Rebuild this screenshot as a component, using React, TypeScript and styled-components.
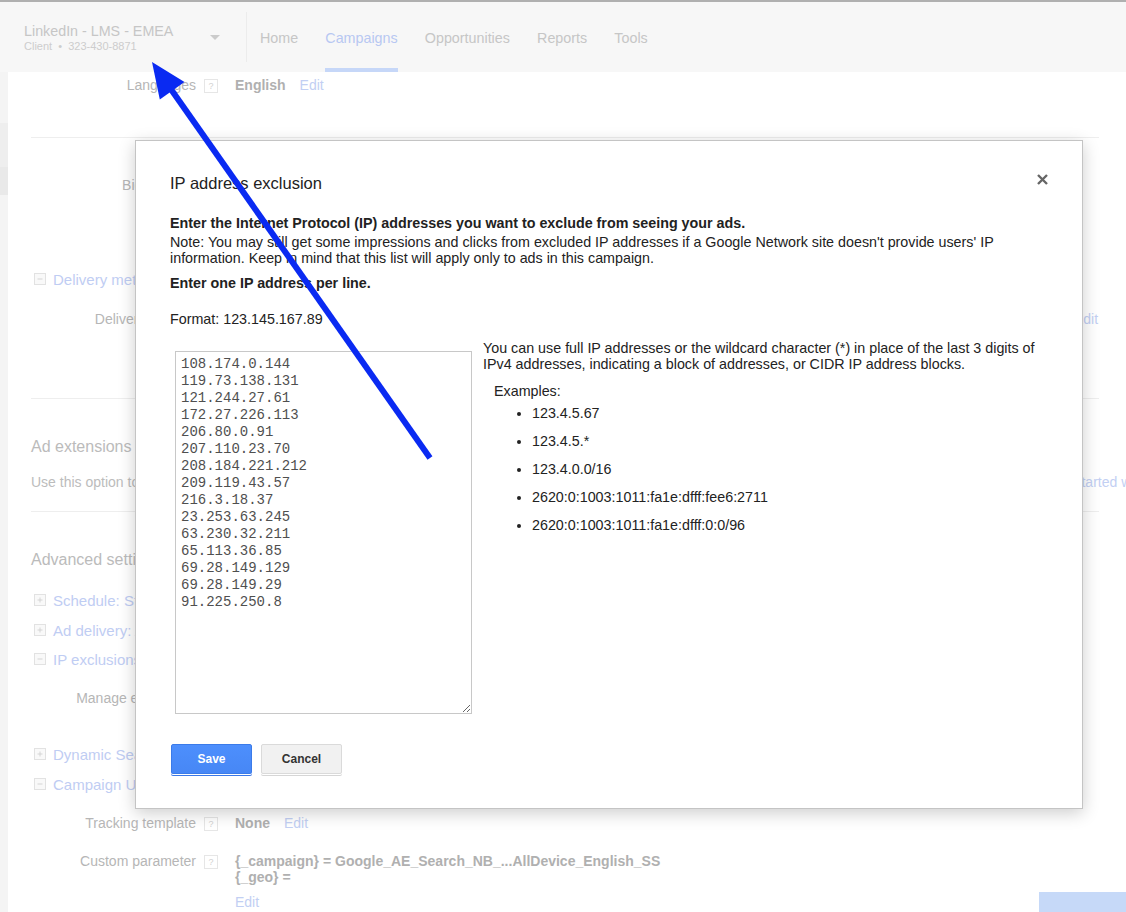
import React from "react";
import styled, { createGlobalStyle } from "styled-components";

const GlobalStyle = createGlobalStyle`
  html, body {
    margin: 0;
    padding: 0;
  }
  body {
    font-family: Arial, "Liberation Sans", Helvetica, sans-serif;
    background: #fff;
  }
`;

const IPS = [
  "108.174.0.144",
  "119.73.138.131",
  "121.244.27.61",
  "172.27.226.113",
  "206.80.0.91",
  "207.110.23.70",
  "208.184.221.212",
  "209.119.43.57",
  "216.3.18.37",
  "23.253.63.245",
  "63.230.32.211",
  "65.113.36.85",
  "69.28.149.129",
  "69.28.149.29",
  "91.225.250.8",
];

const EXAMPLES = [
  "123.4.5.67",
  "123.4.5.*",
  "123.4.0.0/16",
  "2620:0:1003:1011:fa1e:dfff:fee6:2711",
  "2620:0:1003:1011:fa1e:dfff:0:0/96",
];

const NAV = ["Home", "Campaigns", "Opportunities", "Reports", "Tools"];

const ExpandIcon: React.FC<{ open?: boolean }> = ({ open }) => (
  <ExpandBox>
    <svg width="12" height="12" viewBox="0 0 12 12">
      <line x1="3" y1="6" x2="9" y2="6" stroke="#cfcfcf" strokeWidth="1" />
      {!open && <line x1="6" y1="3" x2="6" y2="9" stroke="#cfcfcf" strokeWidth="1" />}
    </svg>
  </ExpandBox>
);

export default function App() {
  return (
    <Page>
      <GlobalStyle />
      <Header>
        <Account>
          <div>
            <AccountName>LinkedIn - LMS - EMEA</AccountName>
            <AccountSub>Client&nbsp; •&nbsp; 323-430-8871</AccountSub>
          </div>
          <Caret />
        </Account>
        <Nav>
          {NAV.map((item) => (
            <NavItem key={item} $active={item === "Campaigns"}>
              {item}
            </NavItem>
          ))}
        </Nav>
      </Header>

      <Body>
        <LeftRail>
          <RailBlock $top={51} $height={44} $shade="#eeeeee" />
          <RailBlock $top={0} $height={28} $shade="#e9e9e9" />
        </LeftRail>
        <Main>
          <FieldRow $top={3}>
            <Label>Languages</Label>
            <Help>?</Help>
            <Value>English</Value>
            <EditLink>Edit</EditLink>
          </FieldRow>
          <Divider $top={42} />
          <FieldRow $top={37}>
            <Label>Bid strategy</Label>
          </FieldRow>
          <SectionToggle $top={74}>
            <ExpandIcon open />
            <SectionLink>Delivery method: Standard</SectionLink>
          </SectionToggle>
          <SplitRow $top={20} $split={1043}>
            <FieldRow $top={0}>
              <Label>Delivery method</Label>
            </FieldRow>
            <Link>Edit</Link>
          </SplitRow>
          <Divider $top={69} />
          <SectionTitle $top={38}>Ad extensions</SectionTitle>
          <SplitRow $top={15} $split={1017}>
            <Muted>Use this option to add extra information to your ads</Muted>
            <Link>Get started with ad extensions</Link>
          </SplitRow>
          <Divider $top={19} />
          <SectionTitle $top={38}>Advanced settings</SectionTitle>
          <SectionToggle $top={20}>
            <ExpandIcon />
            <SectionLink>Schedule: Start date, end date, ad scheduling</SectionLink>
          </SectionToggle>
          <SectionToggle $top={10}>
            <ExpandIcon />
            <SectionLink>Ad delivery: Ad rotation, frequency capping</SectionLink>
          </SectionToggle>
          <SectionToggle $top={9}>
            <ExpandIcon open />
            <SectionLink>IP exclusions</SectionLink>
          </SectionToggle>
          <FieldRow $top={19}>
            <Label>Manage exclusions</Label>
          </FieldRow>
          <SectionToggle $top={36}>
            <ExpandIcon />
            <SectionLink>Dynamic Search Ads</SectionLink>
          </SectionToggle>
          <SectionToggle $top={10}>
            <ExpandIcon open />
            <SectionLink>Campaign URL options (advanced)</SectionLink>
          </SectionToggle>
          <FieldRow $top={19}>
            <Label>Tracking template</Label>
            <Help>?</Help>
            <Value>None</Value>
            <EditLink>Edit</EditLink>
          </FieldRow>
          <FieldRow $top={18}>
            <Label>Custom parameter</Label>
            <Help>?</Help>
            <ValueStack>
              <Value>{"{_campaign} = Google_AE_Search_NB_...AllDevice_English_SS"}</Value>
              <Value>{"{_geo} ="}</Value>
              <StackEdit>Edit</StackEdit>
            </ValueStack>
          </FieldRow>
        </Main>
      </Body>

      <FooterButton />

      <Dialog role="dialog">
        <DialogHead>
          <DialogTitle>IP address exclusion</DialogTitle>
          <CloseButton aria-label="Close">
            <svg width="11" height="11" viewBox="0 0 11 11">
              <path d="M1 1 L10 10 M10 1 L1 10" stroke="#666" strokeWidth="2.4" />
            </svg>
          </CloseButton>
        </DialogHead>
        <Lead>Enter the Internet Protocol (IP) addresses you want to exclude from seeing your ads.</Lead>
        <Note>
          Note: You may still get some impressions and clicks from excluded IP addresses if a Google Network site
          doesn't provide users' IP information. Keep in mind that this list will apply only to ads in this campaign.
        </Note>
        <Instruction>Enter one IP address per line.</Instruction>
        <Format>Format: 123.145.167.89</Format>
        <EntryRow>
          <IpBox defaultValue={IPS.join("\n")} spellCheck={false} />
          <HelpColumn>
            <HelpText>
              You can use full IP addresses or the wildcard character (*) in place of the last 3 digits of IPv4
              addresses, indicating a block of addresses, or CIDR IP address blocks.
            </HelpText>
            <ExamplesLabel>Examples:</ExamplesLabel>
            <ExampleList>
              {EXAMPLES.map((ex) => (
                <li key={ex}>{ex}</li>
              ))}
            </ExampleList>
          </HelpColumn>
        </EntryRow>
        <Actions>
          <Button $primary>Save</Button>
          <Button>Cancel</Button>
        </Actions>
      </Dialog>

      <Arrow width="1126" height="912" viewBox="0 0 1126 912">
        <line x1="430" y1="458" x2="168" y2="85" stroke="#0a2af2" strokeWidth="6" />
        <polygon points="152,62 184.5,82 159.8,99.5" fill="#0a2af2" />
      </Arrow>
    </Page>
  );
}

const Page = styled.div`
  position: relative;
  width: 1126px;
  height: 912px;
  overflow: hidden;
  background: #fff;
`;

const Header = styled.header`
  display: flex;
  height: 70px;
  background: #f7f7f7;
  border-top: 2px solid #b0b0b0;
`;

const Account = styled.div`
  width: 247px;
  flex: none;
  box-sizing: border-box;
  margin: 10px 0;
  padding: 2px 26px 0 24px;
  display: flex;
  align-items: center;
  justify-content: space-between;
  border-right: 1px solid #ececec;
`;

const AccountName = styled.div`
  font-size: 14.3px;
  line-height: 16px;
  color: #c6c6c6;
`;

const AccountSub = styled.div`
  font-size: 11px;
  line-height: 14px;
  color: #cdcdcd;
`;

const Caret = styled.span`
  width: 0;
  height: 0;
  margin-top: -2px;
  border-left: 5px solid transparent;
  border-right: 5px solid transparent;
  border-top: 5px solid #cbcbcb;
`;

const Nav = styled.nav`
  display: flex;
`;

const NavItem = styled.a<{ $active?: boolean }>`
  display: flex;
  align-items: center;
  margin: 0 13.6px;
  padding-top: 6px;
  font-size: 14.3px;
  color: ${(p) => (p.$active ? "#b8c8f2" : "#c6c6c6")};
  border-bottom: 4px solid ${(p) => (p.$active ? "#c6d7f8" : "transparent")};
  &:first-child {
    margin-left: 13px;
  }
`;

const Body = styled.div`
  display: flex;
  height: 840px;
`;

const LeftRail = styled.div`
  flex: none;
  width: 8px;
  background: #f4f4f4;
  display: flex;
  flex-direction: column;
`;

const RailBlock = styled.div<{ $top: number; $height: number; $shade: string }>`
  margin-top: ${(p) => p.$top}px;
  height: ${(p) => p.$height}px;
  background: ${(p) => p.$shade};
`;

const Main = styled.main`
  flex: 1;
  min-width: 0;
  padding: 0 27px 0 23px;
  font-size: 14px;
  color: #b9b9b9;
`;

const FieldRow = styled.div<{ $top: number }>`
  display: flex;
  align-items: flex-start;
  margin-top: ${(p) => p.$top}px;
  line-height: 20px;
  white-space: nowrap;
`;

const Label = styled.span`
  width: 165px;
  flex: none;
  text-align: right;
  color: #b6b6b6;
`;

const Help = styled.span`
  flex: none;
  width: 12px;
  height: 12px;
  margin: 4px 0 0 8px;
  border: 1px solid #e6e6e6;
  font-size: 9px;
  line-height: 12px;
  text-align: center;
  color: #d2d2d2;
`;

const Value = styled.span`
  margin-left: 17px;
  font-weight: bold;
  color: #b0b0b0;
`;

const ValueStack = styled.div`
  display: flex;
  flex-direction: column;
  padding-top: 2px;
  line-height: 16px;
`;

const Link = styled.a`
  color: #c2cff3;
  white-space: nowrap;
`;

const EditLink = styled(Link)`
  margin-left: 14px;
`;

const StackEdit = styled(Link)`
  margin: 9px 0 0 17px;
`;

const Divider = styled.hr<{ $top: number }>`
  margin: ${(p) => p.$top}px 0 0;
  border: 0;
  border-top: 1px solid #eeeeee;
`;

const SectionToggle = styled.div<{ $top: number }>`
  display: flex;
  align-items: center;
  gap: 7px;
  margin: ${(p) => p.$top}px 0 0 3px;
  height: 20px;
`;

const ExpandBox = styled.span`
  display: flex;
  width: 12px;
  height: 12px;
  box-sizing: border-box;
  border: 1px solid #e2e2e2;
  background: #f9f9f9;
  align-items: center;
  justify-content: center;
  svg {
    display: block;
  }
`;

const SectionLink = styled.a`
  font-size: 15px;
  color: #bfcdf3;
  white-space: nowrap;
`;

const SplitRow = styled.div<{ $top: number; $split: number }>`
  display: flex;
  margin-top: ${(p) => p.$top}px;
  line-height: 20px;
  & > :first-child {
    flex: 0 0 ${(p) => p.$split}px;
    margin-top: 0;
  }
`;

const Muted = styled.span`
  color: #bcbcbc;
  white-space: nowrap;
`;

const SectionTitle = styled.h3<{ $top: number }>`
  margin: ${(p) => p.$top}px 0 0;
  font-size: 16px;
  font-weight: normal;
  line-height: 20px;
  color: #bbbbbb;
`;

const FooterButton = styled.div`
  position: absolute;
  right: 0;
  bottom: 0;
  width: 87px;
  height: 20px;
  background: #c6d9f8;
`;

const Dialog = styled.div`
  position: absolute;
  left: 135px;
  top: 140px;
  width: 948px;
  height: 669px;
  box-sizing: border-box;
  padding: 32px 34px 0 34px;
  background: #fff;
  border: 1px solid #c4c4c4;
  box-shadow: 0 4px 16px rgba(0, 0, 0, 0.2);
  font-size: 14.3px;
  line-height: 16px;
  color: #222;
`;

const DialogHead = styled.div`
  display: flex;
  justify-content: space-between;
  align-items: center;
`;

const DialogTitle = styled.h2`
  margin: 0;
  font-size: 16.5px;
  line-height: 20px;
  font-weight: normal;
  color: #222;
`;

const CloseButton = styled.span`
  display: flex;
  margin: -7px 0 0 0;
  svg {
    display: block;
  }
`;

const Lead = styled.p`
  margin: 22px 0 3px;
  font-weight: bold;
`;

const Note = styled.p`
  margin: 0;
  max-width: 860px;
`;

const Instruction = styled.p`
  margin: 9px 0 0;
  font-weight: bold;
`;

const Format = styled.p`
  margin: 20px 0 0;
`;

const EntryRow = styled.div`
  display: flex;
  align-items: flex-start;
  margin-top: 13px;
`;

const IpBox = styled.textarea`
  flex: none;
  width: 297px;
  height: 363px;
  box-sizing: border-box;
  margin: 11px 0 0 5px;
  padding: 4px 5px;
  border: 1px solid #c8c8c8;
  border-radius: 0;
  font-family: "Liberation Mono", "Courier New", monospace;
  font-size: 14px;
  line-height: 17px;
  color: #4f4f4f;
  resize: both;
  outline: none;
`;

const HelpColumn = styled.div`
  margin-left: 11px;
  width: 560px;
`;

const HelpText = styled.p`
  margin: 0;
`;

const ExamplesLabel = styled.div`
  margin: 11px 0 0 11px;
`;

const ExampleList = styled.ul`
  margin: 6px 0 0;
  padding-left: 49px;
  li {
    margin-bottom: 12px;
  }
`;

const Actions = styled.div`
  display: flex;
  gap: 9px;
  margin: 30px 0 0 1px;
`;

const Button = styled.button<{ $primary?: boolean }>`
  width: 81px;
  height: 30px;
  border: 1px solid ${(p) => (p.$primary ? "#3b7be9" : "#dadada")};
  border-radius: 2px;
  background: ${(p) => (p.$primary ? "linear-gradient(#4d8ffd, #4787f5)" : "#f1f1f1")};
  box-shadow: 0 1px 0 #fff, 0 2px 0 ${(p) => (p.$primary ? "#3b78e7" : "#d6d6d6")};
  font-family: Arial, "Liberation Sans", sans-serif;
  font-size: 12px;
  font-weight: bold;
  color: ${(p) => (p.$primary ? "#fff" : "#333")};
  padding: 0;
`;

const Arrow = styled.svg`
  position: absolute;
  left: 0;
  top: 0;
  pointer-events: none;
`;
